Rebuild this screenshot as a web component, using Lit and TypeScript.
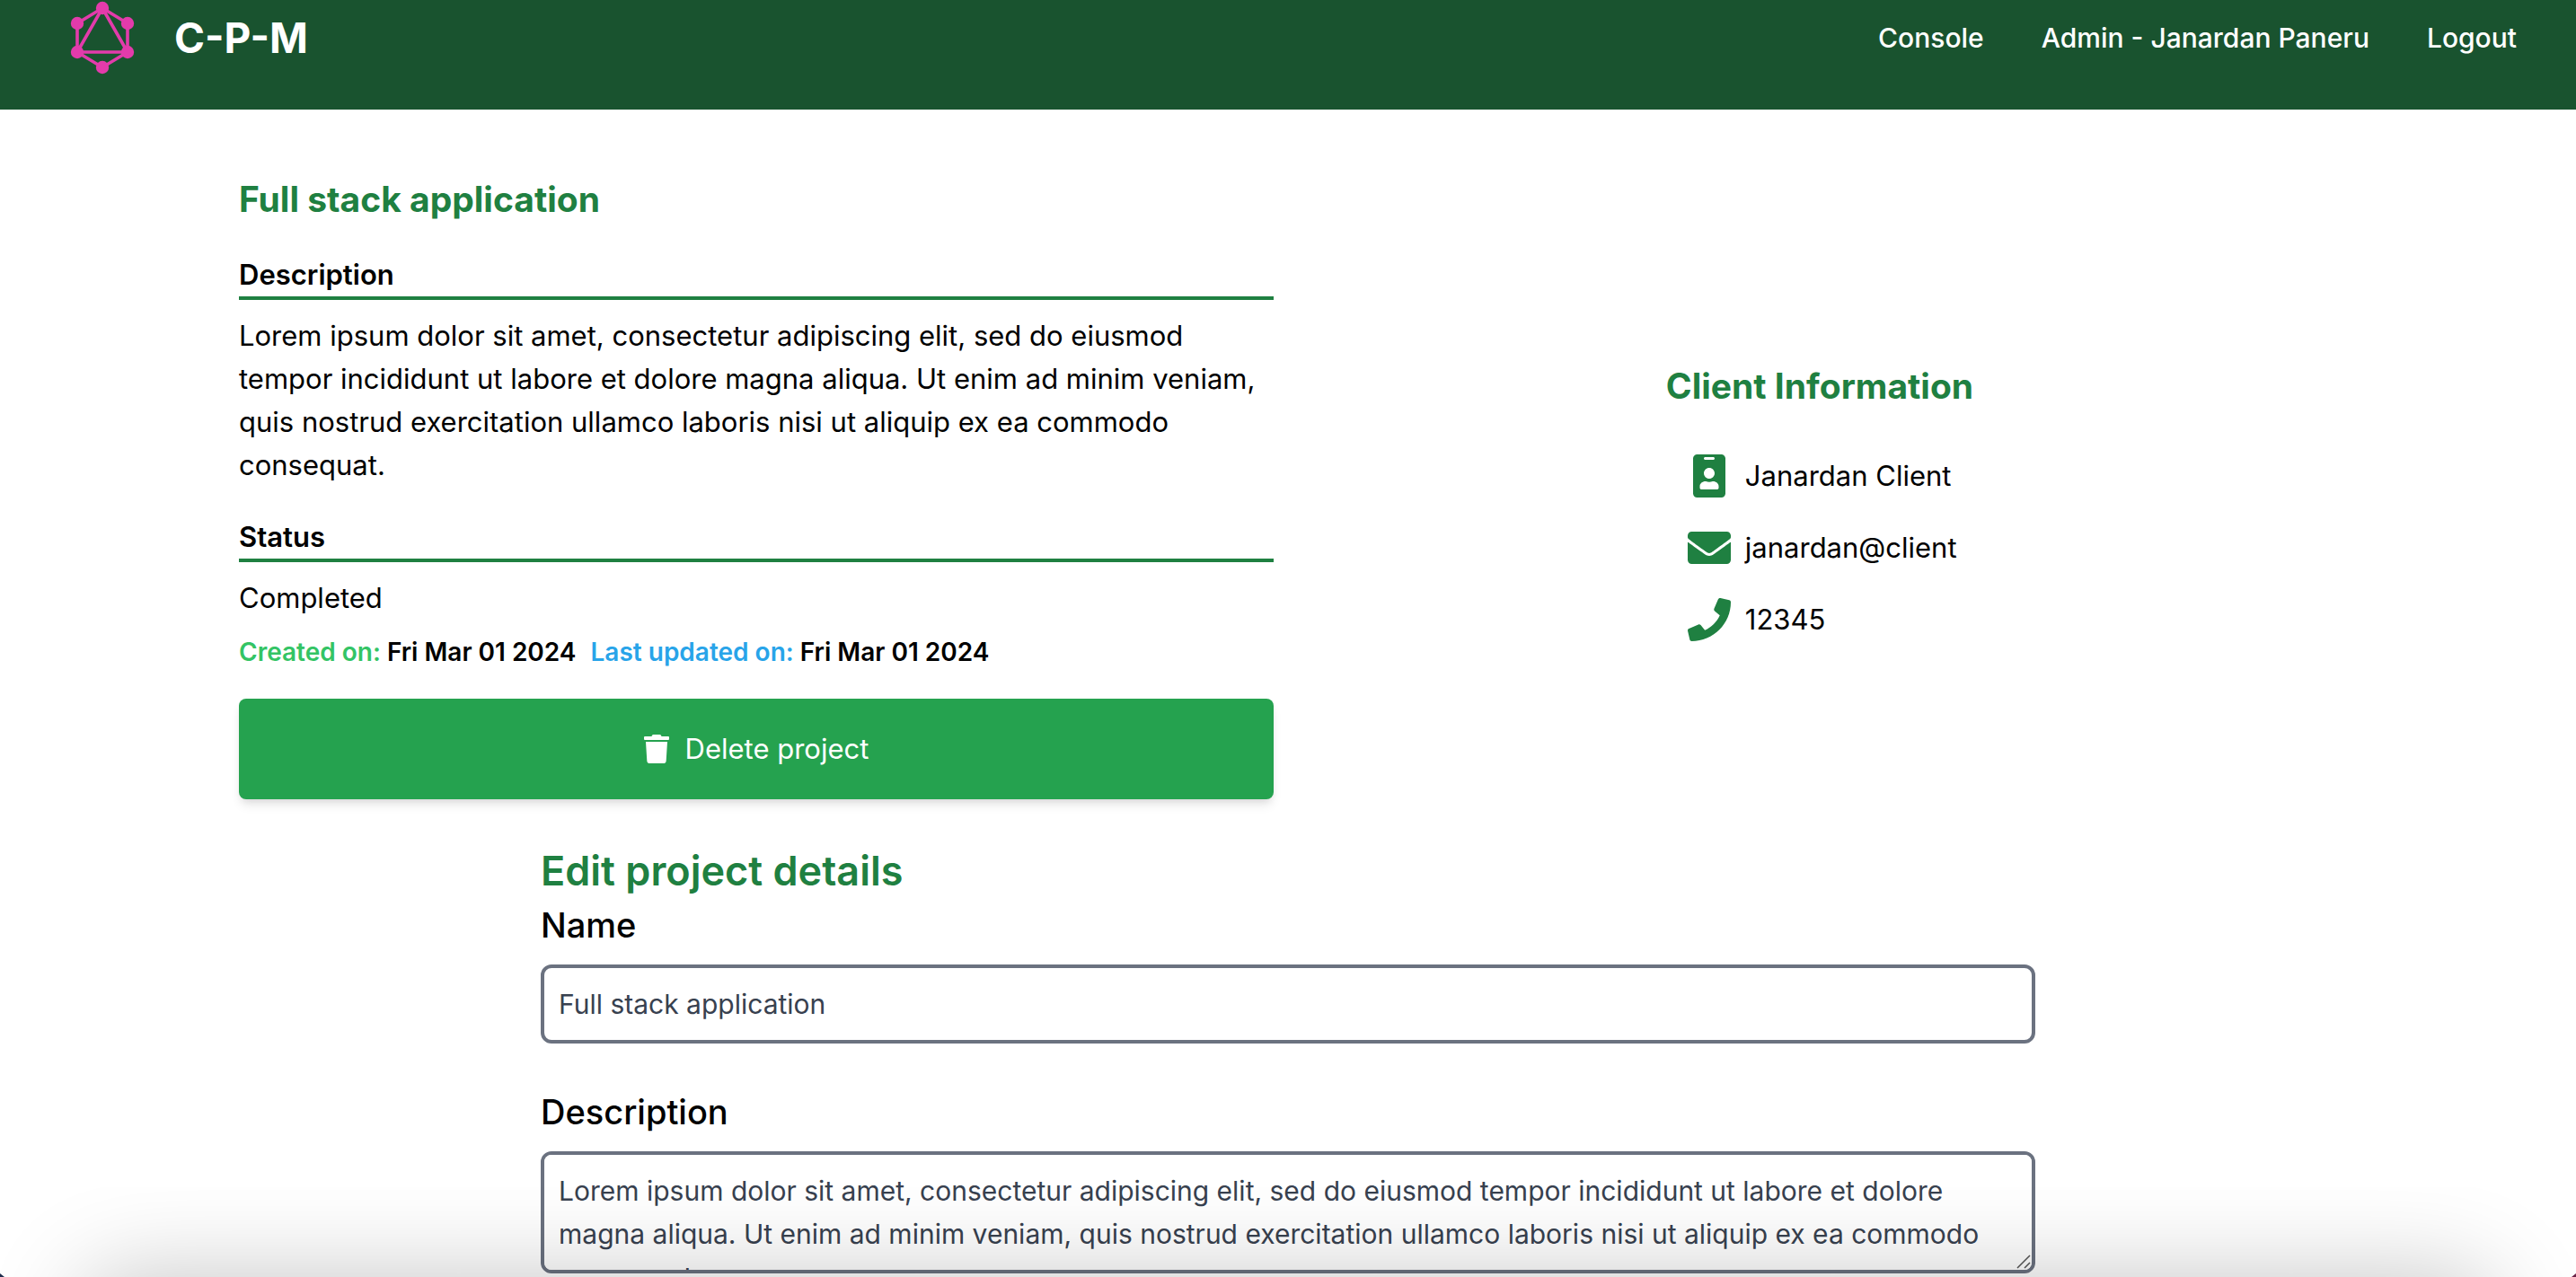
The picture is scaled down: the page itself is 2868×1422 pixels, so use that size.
import { LitElement, html, svg, css } from "lit";
import { customElement, property } from "lit/decorators.js";

const icons: Record<string, { box: string; path: string }> = {
  badge: {
    box: "0 0 384 512",
    path: "M336 0H48C21.5 0 0 21.5 0 48v416c0 26.5 21.5 48 48 48h288c26.5 0 48-21.5 48-48V48c0-26.5-21.5-48-48-48zM144 32h96c8.8 0 16 7.2 16 16s-7.2 16-16 16h-96c-8.8 0-16-7.2-16-16s7.2-16 16-16zm48 128c35.3 0 64 28.7 64 64s-28.7 64-64 64-64-28.7-64-64 28.7-64 64-64zm112 236.8c0 10.6-10 19.2-22.4 19.2H102.4C90 416 80 407.4 80 396.8v-19.2c0-31.8 30.1-57.6 67.2-57.6h5c12.3 5.1 25.7 8 39.8 8s27.6-2.9 39.8-8h5c37.1 0 67.2 25.8 67.2 57.6v19.2z",
  },
  envelope: {
    box: "0 0 512 512",
    path: "M502.3 190.8c3.9-3.1 9.7-.2 9.7 4.7V400c0 26.5-21.5 48-48 48H48c-26.5 0-48-21.5-48-48V195.6c0-5 5.7-7.8 9.7-4.7 22.4 17.4 52.1 39.5 154.1 113.6 21.3 15.5 57.2 48.1 92.2 47.9 35.2.3 71.8-33 92.3-47.9 102-74.1 131.6-96.3 154-113.7zM256 320c23.2.4 56.6-29.2 73.4-41.4 132.7-96.3 142.8-104.7 173.4-128.7 5.8-4.5 9.2-11.5 9.2-18.9v-19c0-26.5-21.5-48-48-48H48c-26.5 0-48 21.5-48 48v19c0 7.4 3.4 14.3 9.2 18.9 30.6 23.9 40.7 32.4 173.4 128.7 16.8 12.2 50.2 41.8 73.4 41.4z",
  },
  phone: {
    box: "0 0 512 512",
    path: "M493.4 24.6l-104-24c-11.3-2.6-22.9 3.3-27.5 13.9l-48 112c-4.2 9.8-1.4 21.3 6.9 28l60.6 49.6c-36 76.7-98.9 140.5-177.2 177.2l-49.6-60.6c-6.8-8.3-18.2-11.1-28-6.9l-112 48C3.9 366.5-2 378.1.6 389.4l24 104C27.1 504.2 36.7 512 48 512c256.1 0 464-207.5 464-464 0-11.2-7.7-20.9-18.6-23.4z",
  },
  trash: {
    box: "0 0 448 512",
    path: "M432 32H312l-9.4-18.7A24 24 0 0 0 281.1 0H166.8a23.72 23.72 0 0 0-21.4 13.3L136 32H16A16 16 0 0 0 0 48v32a16 16 0 0 0 16 16h416a16 16 0 0 0 16-16V48a16 16 0 0 0-16-16zM53.2 467a48 48 0 0 0 47.9 45h245.8a48 48 0 0 0 47.9-45L416 128H32z",
  },
};

const icon = (name: string) => html`<svg class="icon ${name}" viewBox=${icons[name].box} aria-hidden="true">
  ${svg`<path fill="currentColor" d=${icons[name].path}></path>`}
</svg>`;

const reset = css`
  *,
  *::before,
  *::after {
    box-sizing: border-box;
  }
  h1, h2, h3, p, ul {
    margin: 0;
    padding: 0;
  }
  ul {
    list-style: none;
  }
  a {
    color: inherit;
    text-decoration: none;
  }
  button, input, textarea {
    font: inherit;
    margin: 0;
  }
  svg {
    display: block;
    flex: none;
  }
`;

@customElement("site-header")
class SiteHeader extends LitElement {
  static styles = [
    reset,
    css`
      :host {
        display: block;
        background: #19532f;
        color: #fff;
      }
      .bar {
        display: flex;
        justify-content: space-between;
        align-items: center;
        padding: 0 66px 38px 74px;
      }
      .brand {
        display: flex;
        align-items: center;
        gap: 40px;
        font-size: 46px;
        line-height: 64px;
        font-weight: 700;
      }
      .logo {
        width: 80px;
        height: 84px;
      }
      .links {
        display: flex;
        gap: 64px;
        font-size: 30px;
        font-weight: 500;
      }
    `,
  ];

  render() {
    const nodes = [[40, 9], [68, 26], [68, 58], [40, 75], [12, 58], [12, 26]];
    return html`<header class="bar">
      <a class="brand" href="#">
        <svg class="logo" viewBox="0 0 80 84" fill="#e33bab" aria-hidden="true">
          <g fill="none" stroke="#e33bab" stroke-width="3.6">
            <path d="M40 9 68 26V58L40 75 12 58V26Z"></path>
            <path d="M40 9 68 58H12Z"></path>
          </g>
          ${nodes.map(([x, y]) => svg`<circle cx=${x} cy=${y} r="7.2"></circle>`)}
        </svg>
        <span>C-P-M</span>
      </a>
      <nav>
        <ul class="links">
          <li><a href="#console">Console</a></li>
          <li><a href="#admin">Admin - Janardan Paneru</a></li>
          <li><a href="#logout">Logout</a></li>
        </ul>
      </nav>
    </header>`;
  }
}

@customElement("project-overview")
class ProjectOverview extends LitElement {
  @property() name = "";
  @property() description = "";

  static styles = [
    reset,
    css`
      :host {
        display: block;
      }
      .overview {
        display: grid;
        grid-template-columns: 1fr 1fr;
        gap: 32px;
        align-items: center;
        max-width: 2400px;
        margin: 0 auto;
        padding: 72px 32px 0;
      }
      .title {
        font-size: 39px;
        line-height: 56px;
        font-weight: 700;
        color: #1f8041;
      }
      .block {
        margin-top: 32px;
      }
      .label {
        margin-bottom: 16px;
        border-bottom: 4px solid #1f8041;
        font-size: 31px;
        line-height: 48px;
        font-weight: 600;
      }
      .dates {
        display: flex;
        gap: 16px;
        margin-top: 16px;
        font-size: 28px;
        line-height: 40px;
        font-weight: 600;
      }
      .created {
        color: #33c465;
      }
      .updated {
        color: #28a4e9;
      }
      .delete {
        display: flex;
        align-items: center;
        justify-content: center;
        gap: 18px;
        width: 100%;
        margin-top: 32px;
        padding: 32px;
        border: 0;
        border-radius: 8px;
        background: #25a24f;
        color: #fff;
        box-shadow: 0 8px 12px -2px rgb(0 0 0 / 0.1), 0 4px 8px -4px rgb(0 0 0 / 0.1);
        cursor: pointer;
      }
      .client {
        justify-self: center;
        padding-top: 32px;
      }
      .contacts {
        display: grid;
        gap: 32px;
        padding: 48px 0 0 24px;
      }
      .contact {
        display: flex;
        align-items: center;
        gap: 16px;
      }
      .icon {
        width: 48px;
        height: 48px;
        color: #1f8041;
      }
      .icon.trash {
        width: 28px;
        height: 32px;
        color: #fff;
      }
    `,
  ];

  render() {
    return html`<div class="overview">
      <section>
        <h1 class="title">${this.name}</h1>
        <div class="block">
          <h2 class="label">Description</h2>
          <p>${this.description}</p>
        </div>
        <div class="block">
          <h2 class="label">Status</h2>
          <p>Completed</p>
        </div>
        <div class="dates">
          <p><span class="created">Created on:</span> Fri Mar 01 2024</p>
          <p><span class="updated">Last updated on:</span> Fri Mar 01 2024</p>
        </div>
        <button class="delete" type="button">${icon("trash")}<span>Delete project</span></button>
      </section>
      <section class="client">
        <h2 class="title">Client Information</h2>
        <ul class="contacts">
          <li class="contact">${icon("badge")}<span>Janardan Client</span></li>
          <li class="contact">${icon("envelope")}<span>janardan@client</span></li>
          <li class="contact">${icon("phone")}<span>12345</span></li>
        </ul>
      </section>
    </div>`;
  }
}

@customElement("project-form")
class ProjectForm extends LitElement {
  @property() name = "";
  @property() description = "";

  static styles = [
    reset,
    css`
      :host {
        display: block;
      }
      .form {
        max-width: 1664px;
        margin: 48px auto 0;
      }
      .heading {
        font-size: 45px;
        line-height: 64px;
        font-weight: 600;
        color: #1f8041;
      }
      .field {
        margin-bottom: 48px;
      }
      .caption {
        display: block;
        margin-bottom: 16px;
        font-size: 38px;
        line-height: 56px;
        font-weight: 500;
      }
      .control {
        display: block;
        width: 100%;
        padding: 16px;
        border: 4px solid #6b7280;
        border-radius: 12px;
        background: #fff;
        color: #38414f;
        font-size: 30px;
        outline: none;
      }
      .line {
        height: 88px;
      }
      .area {
        resize: none;
        scrollbar-width: none;
      }
      .area-box {
        position: relative;
      }
      /* Resize grip in the corner of the text area */
      .grip {
        position: absolute;
        right: 5px;
        bottom: 5px;
        width: 16px;
        height: 16px;
        pointer-events: none;
      }
      .field.last {
        margin-bottom: 0;
      }
    `,
  ];

  render() {
    return html`<form class="form">
      <h2 class="heading">Edit project details</h2>
      <div class="field">
        <label class="caption" for="name">Name</label>
        <input class="control line" id="name" type="text" .value=${this.name} />
      </div>
      <div class="field last">
        <label class="caption" for="description">Description</label>
        <div class="area-box">
          <textarea class="control area" id="description" rows="2" .value=${this.description}></textarea>
          <svg class="grip" viewBox="0 0 16 16" stroke="#555" stroke-width="1.5" aria-hidden="true">
            <path d="M1 15 15 1M9 15l6-6"></path>
          </svg>
        </div>
      </div>
    </form>`;
  }
}

@customElement("app-root")
class AppRoot extends LitElement {
  static styles = [
    reset,
    css`
      :host {
        display: block;
        font-family: Inter, "Liberation Sans", sans-serif;
        font-size: 31px;
        line-height: 48px;
        color: #000;
      }
      .page {
        min-height: 100vh;
        background: #fff;
      }
      /* Soft shade along the lower edge of the window */
      .shade {
        position: fixed;
        inset: auto 0 0;
        height: 100px;
        overflow: hidden;
        pointer-events: none;
      }
      .shade-cast {
        position: absolute;
        top: 100%;
        left: 92px;
        right: 92px;
        height: 200px;
        border-radius: 40px;
        box-shadow: 0 0 110px rgb(0 0 0 / 0.23);
      }
      .corner {
        position: absolute;
        bottom: 0;
        width: 5px;
        height: 4px;
      }
      .corner-left {
        left: 0;
        background: #1f2d4d;
        clip-path: polygon(0 0, 100% 100%, 0 100%);
      }
      .corner-right {
        right: 0;
        background: #6b2348;
        clip-path: polygon(100% 0, 100% 100%, 0 100%);
      }
    `,
  ];

  render() {
    const name = "Full stack application";
    const description =
      "Lorem ipsum dolor sit amet, consectetur adipiscing elit, sed do eiusmod tempor incididunt ut labore et dolore magna aliqua. Ut enim ad minim veniam, quis nostrud exercitation ullamco laboris nisi ut aliquip ex ea commodo consequat.";
    return html`<div class="page">
        <site-header></site-header>
        <main>
          <project-overview .name=${name} .description=${description}></project-overview>
          <project-form .name=${name} .description=${description}></project-form>
        </main>
      </div>
      <div class="shade">
        <div class="shade-cast"></div>
        <div class="corner corner-left"></div>
        <div class="corner corner-right"></div>
      </div>`;
  }
}
